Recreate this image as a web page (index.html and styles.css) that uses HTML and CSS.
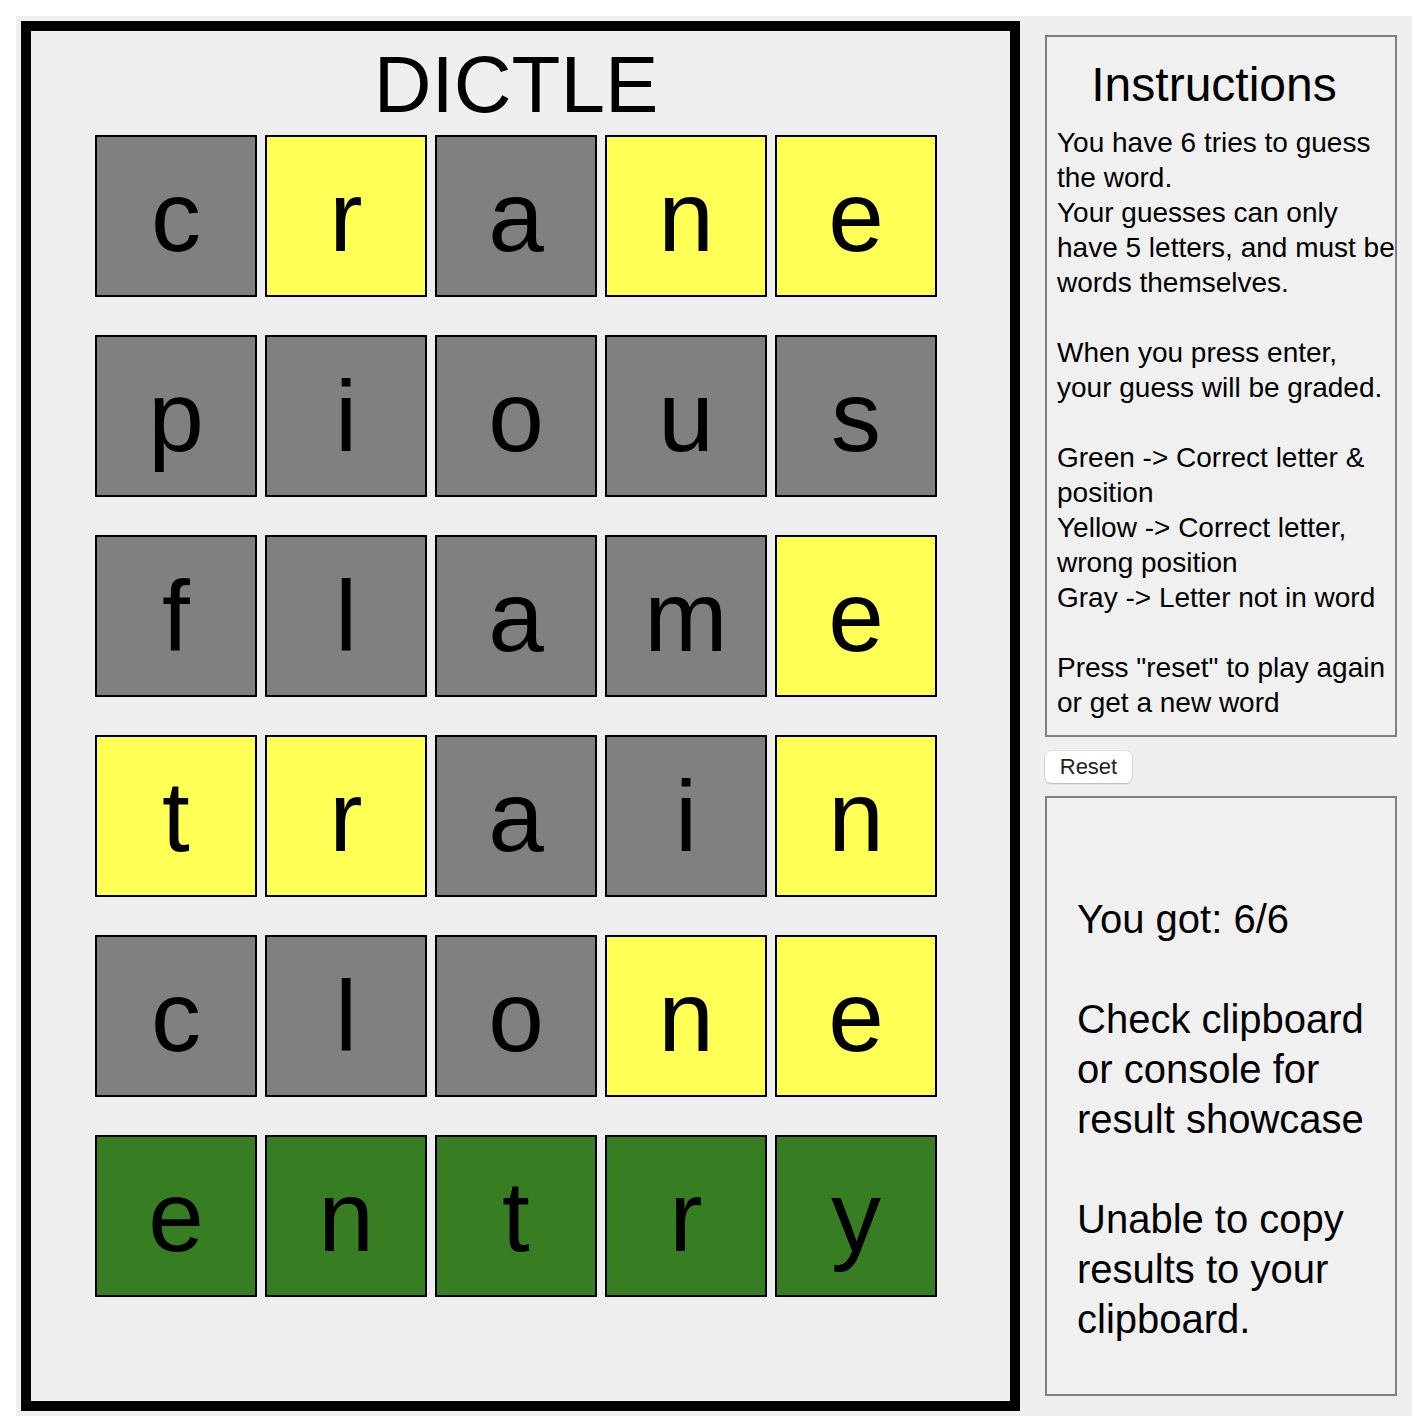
FILE: index.html
```html
<!DOCTYPE html>
<html lang="en">
<head>
<meta charset="utf-8">
<title>DICTLE</title>
<link rel="stylesheet" href="styles.css">
</head>
<body>
<div class="app">
  <section class="game">
    <h1 class="title">DICTLE</h1>
    <div class="board">
      <div class="row">
        <div class="tile gray">c</div><div class="tile yellow">r</div><div class="tile gray">a</div><div class="tile yellow">n</div><div class="tile yellow">e</div>
      </div>
      <div class="row">
        <div class="tile gray">p</div><div class="tile gray">i</div><div class="tile gray">o</div><div class="tile gray">u</div><div class="tile gray">s</div>
      </div>
      <div class="row">
        <div class="tile gray">f</div><div class="tile gray">l</div><div class="tile gray">a</div><div class="tile gray">m</div><div class="tile yellow">e</div>
      </div>
      <div class="row">
        <div class="tile yellow">t</div><div class="tile yellow">r</div><div class="tile gray">a</div><div class="tile gray">i</div><div class="tile yellow">n</div>
      </div>
      <div class="row">
        <div class="tile gray">c</div><div class="tile gray">l</div><div class="tile gray">o</div><div class="tile yellow">n</div><div class="tile yellow">e</div>
      </div>
      <div class="row">
        <div class="tile green">e</div><div class="tile green">n</div><div class="tile green">t</div><div class="tile green">r</div><div class="tile green">y</div>
      </div>
    </div>
  </section>
  <aside class="side">
    <div class="instructions">
      <h2 class="instructions-title">Instructions</h2>
      <p class="instructions-text">You have 6 tries to guess the word.<br>Your guesses can only have 5 letters, and must be words themselves.<br><br>When you press enter, your guess will be graded.<br><br>Green -&gt; Correct letter &amp; position<br>Yellow -&gt; Correct letter, wrong position<br>Gray -&gt; Letter not in word<br><br>Press "reset" to play again or get a new word</p>
    </div>
    <button class="reset" type="button">Reset</button>
    <div class="result">
      <p class="result-text">You got: 6/6<br><br>Check clipboard or console for result showcase<br><br>Unable to copy results to your clipboard.</p>
    </div>
  </aside>
</div>
</body>
</html>
```

FILE: styles.css
```css
html, body {
  margin: 0;
  background: #ffffff;
}

body {
  padding: 16px 0 0 16px;
  font-family: "Liberation Sans", Arial, Helvetica, sans-serif;
  color: #000;
}

.app {
  display: flex;
  align-items: flex-start;
  background: #efefef;
  padding: 5px;
  height: 1390px;
}

.game {
  flex: none;
  width: 970px;
  height: 1370px;
  padding-right: 9px;
  border: 10px solid #000;
  background: #efefef;
}

.title {
  margin: 8px 0 0;
  font-size: 80px;
  line-height: 92px;
  font-weight: normal;
  text-align: center;
}

.board {
  display: flex;
  flex-direction: column;
  gap: 38px;
  width: 842px;
  margin: 4px auto 0;
}

.row {
  display: flex;
  gap: 8px;
}

.tile {
  width: 158px;
  height: 158px;
  border: 2px solid #000;
  display: flex;
  align-items: center;
  justify-content: center;
  font-size: 100px;
  line-height: 1;
}

.gray { background: #808080; }
.yellow { background: #ffff55; }
.green { background: #377e22; }

.side {
  flex: none;
  width: 352px;
  margin: 14px 0 0 25px;
  display: flex;
  flex-direction: column;
  align-items: flex-start;
}

.instructions {
  box-sizing: border-box;
  width: 352px;
  border: 2px solid #808080;
  background: #f0f0f0;
  padding: 18px 0 15px 10px;
}

.instructions-title {
  margin: 0 0 10px;
  padding-right: 24px;
  font-size: 48px;
  line-height: 60px;
  font-weight: normal;
  text-align: center;
}

.instructions-text {
  margin: 0;
  font-size: 28px;
  line-height: 35px;
}

.reset {
  margin-top: 14px;
  width: 87px;
  height: 32px;
  padding: 0;
  border: none;
  border-radius: 6px;
  background: #ffffff;
  box-shadow: 0 0 0 0.5px rgba(0, 0, 0, 0.12), 0 1px 2px rgba(0, 0, 0, 0.18);
  font-family: "Liberation Sans", Arial, sans-serif;
  font-size: 22px;
  color: #222;
}

.result {
  box-sizing: border-box;
  width: 352px;
  height: 600px;
  margin-top: 13px;
  border: 2px solid #808080;
  background: #f0f0f0;
  padding: 96px 20px 0 30px;
}

.result-text {
  margin: 0;
  font-size: 40px;
  line-height: 50px;
}
```
